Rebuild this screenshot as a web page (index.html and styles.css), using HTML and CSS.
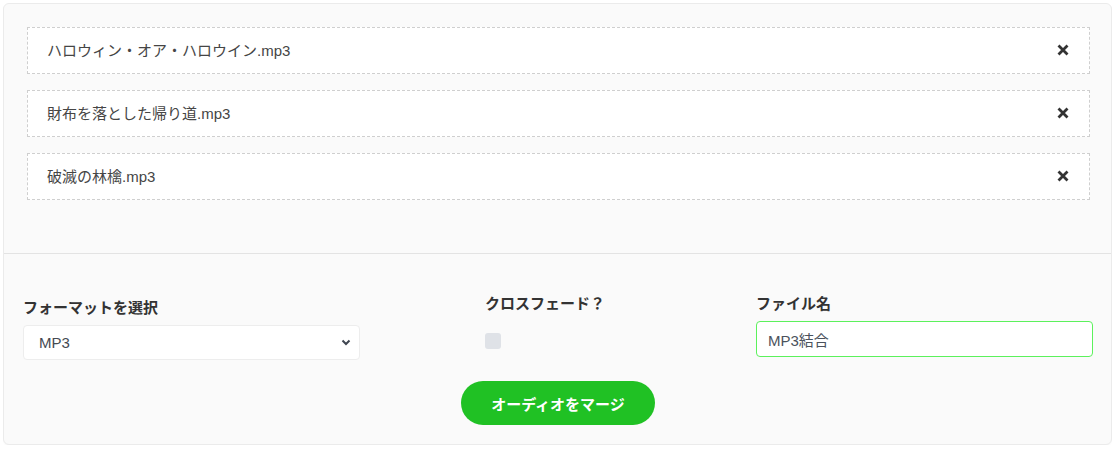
FILE: index.html
```html
<!DOCTYPE html>
<html lang="ja">
<head>
<meta charset="utf-8">
<title>MP3結合</title>
<link rel="stylesheet" href="styles.css">
</head>
<body>
<div class="card">
  <div class="files">
    <div class="file-item">
      <span class="file-name">ハロウィン・オア・ハロウイン.mp3</span>
      <button class="remove" aria-label="削除"><svg width="12" height="12" viewBox="0 0 12 12"><path d="M1.5 1.5 L10.5 10.5 M10.5 1.5 L1.5 10.5" stroke="#333" stroke-width="2.8" stroke-linecap="butt"/></svg></button>
    </div>
    <div class="file-item">
      <span class="file-name">財布を落とした帰り道.mp3</span>
      <button class="remove" aria-label="削除"><svg width="12" height="12" viewBox="0 0 12 12"><path d="M1.5 1.5 L10.5 10.5 M10.5 1.5 L1.5 10.5" stroke="#333" stroke-width="2.8" stroke-linecap="butt"/></svg></button>
    </div>
    <div class="file-item">
      <span class="file-name">破滅の林檎.mp3</span>
      <button class="remove" aria-label="削除"><svg width="12" height="12" viewBox="0 0 12 12"><path d="M1.5 1.5 L10.5 10.5 M10.5 1.5 L1.5 10.5" stroke="#333" stroke-width="2.8" stroke-linecap="butt"/></svg></button>
    </div>
  </div>
  <div class="options">
    <div class="fields">
      <div class="field field-format">
        <label class="field-label">フォーマットを選択</label>
        <div class="select-wrap">
          <select class="select">
            <option>MP3</option>
          </select>
          <svg class="chevron" width="10" height="7" viewBox="0 0 10 7"><path d="M1.5 1.5 L5 5 L8.5 1.5" fill="none" stroke="#3f4550" stroke-width="2"/></svg>
        </div>
      </div>
      <div class="field field-cross">
        <label class="field-label">クロスフェード？</label>
        <input type="checkbox" class="checkbox">
      </div>
      <div class="field field-name">
        <label class="field-label">ファイル名</label>
        <input type="text" class="text-input" value="MP3結合">
      </div>
    </div>
    <div class="actions">
      <button class="merge">オーディオをマージ</button>
    </div>
  </div>
</div>
</body>
</html>
```

FILE: styles.css
```css
html, body {
  background: #ffffff;
}
body {
  margin: 3px;
  font-family: "Liberation Sans", "Noto Sans CJK JP", sans-serif;
  font-size: 15px;
  color: #444;
}
.card {
  background: #fafafa;
  border: 1px solid #ebebeb;
  border-radius: 6px;
  box-shadow: 0 1px 2px rgba(0,0,0,0.03);
}
.files {
  padding: 23px 21px 53px 23px;
  display: flex;
  flex-direction: column;
  gap: 16px;
  border-bottom: 1px solid #e3e3e3;
}
.file-item {
  height: 47px;
  box-sizing: border-box;
  border: 1px dashed #cfcfcf;
  background: #ffffff;
  display: flex;
  align-items: center;
  justify-content: space-between;
  padding: 0 20px 0 19px;
}
.file-name {
  color: #454545;
  line-height: 20px;
}
.remove {
  border: none;
  background: none;
  padding: 0;
  width: 12px;
  height: 12px;
  display: flex;
  margin-top: -2px;
}
.options {
  padding: 40px 18px 19px 19px;
}
.fields {
  display: grid;
  grid-template-columns: 337px 1fr 337px;
  align-items: start;
}
.field {
  display: flex;
  flex-direction: column;
}
.field-label {
  font-weight: bold;
  color: #333;
  line-height: 20px;
  margin-bottom: 7px;
}
.field-format {
  margin-top: 4px;
}
.select-wrap {
  position: relative;
}
.select {
  appearance: none;
  -webkit-appearance: none;
  width: 100%;
  height: 35px;
  box-sizing: border-box;
  border: 1px solid #ededed;
  border-radius: 4px;
  background: #ffffff;
  padding: 0 30px 0 15px;
  font-family: inherit;
  font-size: 15px;
  color: #454a52;
  outline: none;
}
.chevron {
  position: absolute;
  right: 9px;
  top: 14px;
}
.field-cross {
  justify-self: center;
  width: 146px;
}
.checkbox {
  appearance: none;
  -webkit-appearance: none;
  width: 16px;
  height: 16px;
  margin: 12px 0 0 0;
  border-radius: 3px;
  background: #dfe2e7;
  border: none;
}
.text-input {
  height: 36px;
  box-sizing: border-box;
  border: 1px solid #5cf15c;
  border-radius: 4px;
  background: #ffffff;
  padding: 0 11px;
  font-family: inherit;
  font-size: 15px;
  color: #4b525c;
  outline: none;
}
.actions {
  display: flex;
  justify-content: center;
  margin-top: 21px;
}
.merge {
  width: 194px;
  height: 44px;
  border: none;
  border-radius: 22px;
  background: #20c124;
  color: #ffffff;
  font-family: inherit;
  font-size: 15px;
  font-weight: bold;
  cursor: pointer;
}
```
